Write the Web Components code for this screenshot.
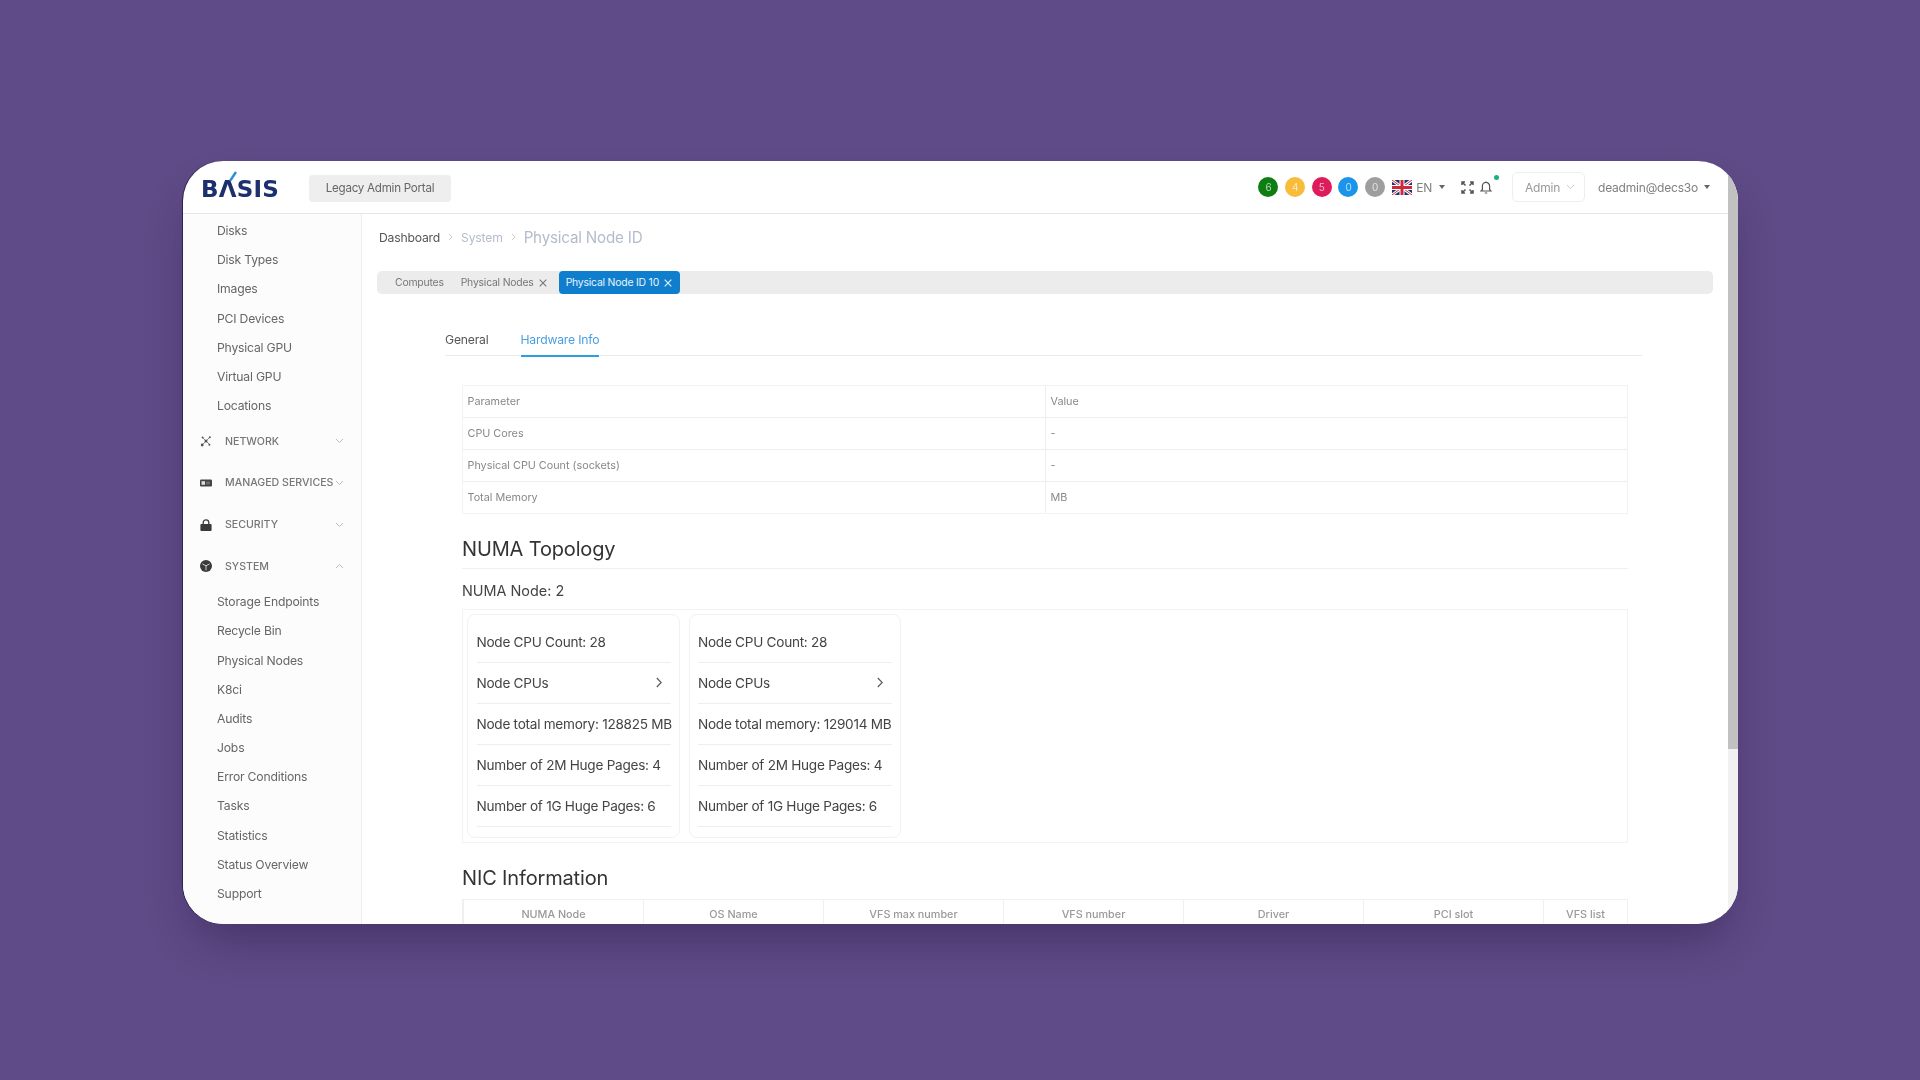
<!DOCTYPE html>
<html lang="en">
<head>
<meta charset="utf-8">
<title>Physical Node ID</title>
<style>
  html, body { margin: 0; height: 100%; }
  body {
    background: #5f4b87;
    font-family: Inter, "Liberation Sans", sans-serif;
    overflow: hidden;
  }
</style>
</head>
<body>
<basis-window>
  <basis-header slot="header"></basis-header>
  <basis-sidebar slot="sidebar">
    <side-item>Disks</side-item>
    <side-item>Disk Types</side-item>
    <side-item>Images</side-item>
    <side-item>PCI Devices</side-item>
    <side-item>Physical GPU</side-item>
    <side-item>Virtual GPU</side-item>
    <side-item>Locations</side-item>
    <side-group icon="network">NETWORK</side-group>
    <side-group icon="services">MANAGED SERVICES</side-group>
    <side-group icon="lock">SECURITY</side-group>
    <side-group icon="cube" open>SYSTEM</side-group>
    <side-item>Storage Endpoints</side-item>
    <side-item>Recycle Bin</side-item>
    <side-item>Physical Nodes</side-item>
    <side-item>K8ci</side-item>
    <side-item>Audits</side-item>
    <side-item>Jobs</side-item>
    <side-item>Error Conditions</side-item>
    <side-item>Tasks</side-item>
    <side-item>Statistics</side-item>
    <side-item>Status Overview</side-item>
    <side-item>Support</side-item>
  </basis-sidebar>
  <node-page slot="main"></node-page>
</basis-window>

<script>
const ICONS = {
  network: `<svg width="12" height="12" viewBox="0 0 12 12" fill="#555"><circle cx="2.600" cy="2.600" r="1"/><circle cx="9.800" cy="2.200" r="1"/><circle cx="2.200" cy="10" r="1.400"/><circle cx="9.400" cy="9.800" r="1"/><circle cx="6" cy="6" r="1.500"/><path d="M2.600 2.600l7 7M9.800 2.200L2.200 10" stroke="#555" stroke-width=".7"/></svg>`,
  services: `<svg width="12" height="12" viewBox="0 0 12 12"><rect x="0" y="2.600" width="12" height="6.800" rx="1.200" fill="#444"/><rect x="1.500" y="4.200" width="3.500" height="3.600" fill="#ddd"/><rect x="6.500" y="4.600" width="1" height="2.800" fill="#999"/><rect x="8.500" y="4.600" width="1" height="2.800" fill="#999"/></svg>`,
  lock: `<svg width="12" height="12" viewBox="0 0 12 12"><path d="M3.200 5.200V3.600a2.800 2.800 0 0 1 5.600 0v1.600" fill="none" stroke="#3a3a3a" stroke-width="1.300"/><rect x="0.400" y="5" width="11.200" height="7" rx="1" fill="#3a3a3a"/></svg>`,
  cube: `<svg width="12" height="12" viewBox="0 0 12 12"><circle cx="6" cy="6" r="6" fill="#3a3a3a"/><path d="M2.400 3.900L6 5.800l3.600-1.900M6 5.800v4.600" fill="none" stroke="#ddd" stroke-width=".9"/></svg>`,
};

const chevron = (color, up) => `<svg width="9" height="6" viewBox="0 0 9 6" fill="none" stroke="${color}" stroke-width="1"><path d="${up ? "M1 5l3.500-3.500L8 5" : "M1 1l3.500 3.500L8 1"}"/></svg>`;
const cross = (color) => `<svg width="8" height="8" viewBox="0 0 8 8" stroke="${color}" stroke-width="1.100"><path d="M.7.7l6.600 6.600M7.300.7L.7 7.300"/></svg>`;

class BasisWindow extends HTMLElement {
  constructor() {
    super();
    this.attachShadow({ mode: "open" });
    this.shadowRoot.innerHTML = `
    <style>
      :host {
        display: flex;
        width: 1555px;
        height: 763px;
        margin: 161px 0 0 183px;
        background: #fff;
        border-radius: 40px;
        overflow: hidden;
        box-shadow: -1px 0 0 #2b2450, 0 25px 45px -12px rgba(35, 20, 60, .45);
        filter: blur(.55px);
      }
      .app { flex: 1; min-width: 0; display: flex; flex-direction: column; }
      .body { flex: 1; min-height: 0; display: flex; }
      .scrollbar { width: 10px; background: #f1f1f1; }
      .thumb { height: 588px; background: #c1c1c1; }
    </style>
    <div class="app">
      <slot name="header"></slot>
      <div class="body">
        <slot name="sidebar"></slot>
        <slot name="main"></slot>
      </div>
    </div>
    <div class="scrollbar"><div class="thumb"></div></div>`;
  }
}

class StatusDot extends HTMLElement {
  constructor() {
    super();
    this.attachShadow({ mode: "open" });
    this.shadowRoot.innerHTML = `
    <style>
      :host {
        display: flex;
        width: 20px;
        height: 20px;
        border-radius: 50%;
        align-items: center;
        justify-content: center;
        font-size: 10px;
        color: #ffffffb0;
        background: var(--dot);
      }
    </style>
    <slot></slot>`;
  }
}

class BasisHeader extends HTMLElement {
  constructor() {
    super();
    this.attachShadow({ mode: "open" });
    this.shadowRoot.innerHTML = `
    <style>
      :host {
        display: flex;
        align-items: center;
        height: 52px;
        flex: none;
        border-bottom: 1px solid #e6e6e6;
        font-size: 12px;
        letter-spacing: -.2px;
        color: #808080;
      }
      .logo {
        position: relative;
        margin: 3px 0 0 18px;
        width: 108px;
        flex: none;
        font: bold 23px/28px "DejaVu Sans", sans-serif;
        color: #1c2f6e;
        letter-spacing: .2px;
      }
      .logo svg { position: absolute; left: 26px; top: -4px; }
      .legacy {
        width: 142px;
        height: 27px;
        margin-top: 2px;
        display: flex;
        align-items: center;
        justify-content: center;
        background: #eee;
        border-radius: 4px;
        color: #666;
        font-size: 11.600px;
        letter-spacing: -.25px;
      }
      .tools { margin-left: auto; display: flex; align-items: center; }
      .dots { display: flex; gap: 6.700px; margin-right: 7px; }
      .lang { display: flex; align-items: center; gap: 4px; }
      .caret { width: 0; height: 0; border: 3.500px solid transparent; border-top: 4px solid #666; border-bottom: 0; }
      .full { margin: 0 0 0 16px; display: flex; }
      .bell { margin-left: 6px; position: relative; display: flex; }
      .bell i {
        position: absolute;
        width: 5px;
        height: 5px;
        border-radius: 50%;
        background: #1fae80;
        left: 14px;
        top: -6px;
      }
      .role {
        height: 28px;
        margin-left: 20px;
        border: 1px solid #eee;
        border-radius: 5px;
        display: flex;
        align-items: center;
        justify-content: space-between;
        padding: 0 9px 0 12px;
        width: 50px;
        color: #999;
      }
      .user { margin: 0 18px 0 13px; display: flex; align-items: center; gap: 6px; }
    </style>
    <div class="logo">BΛSIS<svg width="12" height="10" viewBox="0 0 12 10"><path d="M3 10L9 1" stroke="#2a8fd8" stroke-width="2.400"/></svg></div>
    <div class="legacy">Legacy Admin Portal</div>
    <div class="tools">
      <div class="dots">
        <status-dot style="--dot:#0e7d12">6</status-dot>
        <status-dot style="--dot:#f8bc3b">4</status-dot>
        <status-dot style="--dot:#df1c5b">5</status-dot>
        <status-dot style="--dot:#1a95ea">0</status-dot>
        <status-dot style="--dot:#9e9e9e">0</status-dot>
      </div>
      <div class="lang">
        <svg width="20" height="15" viewBox="0 0 60 45"><rect width="60" height="45" fill="#2b2f6b"/><path d="M0 0l60 45M60 0L0 45" stroke="#fff" stroke-width="9"/><path d="M0 0l60 45M60 0L0 45" stroke="#cc2a3c" stroke-width="3"/><path d="M30 0v45M0 22.500h60" stroke="#fff" stroke-width="15"/><path d="M30 0v45M0 22.500h60" stroke="#cc2a3c" stroke-width="9"/></svg>
        <span>EN</span><span class="caret" style="margin-left:3px"></span>
      </div>
      <div class="full"><svg width="13" height="13" viewBox="0 0 13 13" fill="none" stroke="#555" stroke-width="1.500"><path d="M1 4V1h3M1 1l3.500 3.500M12 4V1H9M12 1L8.500 4.500M1 9v3h3M1 12l3.500-3.500M12 9v3H9M12 12L8.500 8.500"/></svg></div>
      <div class="bell"><svg width="12" height="13" viewBox="0 0 12 13" fill="none" stroke="#555" stroke-width="1.200"><path d="M1 10h10L9.600 8.500V5a3.600 3.600 0 0 0-7.200 0v3.500zM4.800 12h2.400M6 1V.4"/></svg><i></i></div>
      <div class="role"><span>Admin</span>${chevron("#ccc")}</div>
      <div class="user"><span>deadmin@decs3o</span><span class="caret"></span></div>
    </div>`;
  }
}

class BasisSidebar extends HTMLElement {
  constructor() {
    super();
    this.attachShadow({ mode: "open" });
    this.shadowRoot.innerHTML = `
    <style>
      :host {
        display: block;
        flex: none;
        width: 178px;
        padding-top: 2px;
        background: #fcfcfc;
        border-right: 1px solid #eee;
        overflow: hidden;
      }
    </style>
    <slot></slot>`;
  }
}

class SideItem extends HTMLElement {
  constructor() {
    super();
    this.attachShadow({ mode: "open" });
    this.shadowRoot.innerHTML = `
    <style>
      :host {
        display: flex;
        align-items: center;
        height: 29.200px;
        padding-left: 34px;
        font-size: 12.200px;
        letter-spacing: -.2px;
        color: #666;
      }
    </style>
    <slot></slot>`;
  }
}

class SideGroup extends HTMLElement {
  connectedCallback() {
    const icon = ICONS[this.getAttribute("icon")];
    const open = this.hasAttribute("open");
    this.attachShadow({ mode: "open" });
    this.shadowRoot.innerHTML = `
    <style>
      :host {
        display: flex;
        align-items: center;
        height: 41.700px;
        padding-left: 17px;
        font-size: 10.600px;
        font-weight: 500;
        color: #777;
      }
      .icon { display: flex; width: 12px; margin-right: 13px; }
      .label { white-space: nowrap; width: 110px; }
      .chev { display: flex; }
    </style>
    <span class="icon">${icon}</span>
    <span class="label"><slot></slot></span>
    <span class="chev">${chevron("#bbb", open)}</span>`;
  }
}

class CrumbBar extends HTMLElement {
  constructor() {
    super();
    this.attachShadow({ mode: "open" });
    this.shadowRoot.innerHTML = `
    <style>
      :host {
        display: flex;
        align-items: center;
        height: 24px;
        margin: 11px 0 0 17px;
        font-size: 12.200px;
        letter-spacing: -.2px;
        color: #555;
      }
      .sep { margin: 0 8px; display: flex; }
      .mid { color: #b4bccb; }
      .cur { color: #b4bccb; font-size: 15.200px; }
    </style>
    <span>Dashboard</span>
    <span class="sep"><svg width="5" height="8" viewBox="0 0 5 8" fill="none" stroke="#ccc"><path d="M1 1l3 3-3 3"/></svg></span>
    <span class="mid">System</span>
    <span class="sep"><svg width="5" height="8" viewBox="0 0 5 8" fill="none" stroke="#ccc"><path d="M1 1l3 3-3 3"/></svg></span>
    <span class="cur">Physical Node ID</span>`;
  }
}

class TabChip extends HTMLElement {
  connectedCallback() {
    const active = this.hasAttribute("active");
    const close = this.hasAttribute("close");
    this.attachShadow({ mode: "open" });
    this.shadowRoot.innerHTML = `
    <style>
      :host {
        display: flex;
        align-items: center;
        gap: 5px;
        height: 23px;
        font-size: 10.400px;
        letter-spacing: -.2px;
        white-space: nowrap;
        color: ${active ? "#e8f4fd" : "#777"};
        background: ${active ? "#0f7ecd" : "transparent"};
        border-radius: ${active ? "4px" : "0"};
        padding: 0 ${active ? "8px 0 7px" : "0"};
      }
      span { display: flex; }
    </style>
    <slot></slot>
    ${close ? `<span>${cross(active ? "#e8f4fd" : "#777")}</span>` : ""}`;
  }
}

class TabStrip extends HTMLElement {
  constructor() {
    super();
    this.attachShadow({ mode: "open" });
    this.shadowRoot.innerHTML = `
    <style>
      :host {
        display: flex;
        align-items: center;
        height: 23px;
        margin: 22px 15px 0 15px;
        padding-left: 18px;
        background: #ececec;
        border-radius: 5px;
      }
      ::slotted(:nth-child(1)) { margin-right: 17px; }
      ::slotted(:nth-child(2)) { margin-right: 12px; }
    </style>
    <slot></slot>`;
  }
}

class DetailTabs extends HTMLElement {
  constructor() {
    super();
    this.attachShadow({ mode: "open" });
    this.shadowRoot.innerHTML = `
    <style>
      :host {
        display: flex;
        height: 31px;
        margin-top: 30px;
        gap: 32px;
        border-bottom: 1.500px solid #e8ecef;
        font-size: 12.200px;
        letter-spacing: -.2px;
        color: #555;
      }
      .on { color: #4a9fe0; position: relative; }
      .on::after {
        content: "";
        position: absolute;
        left: 0;
        right: 0;
        bottom: -1.500px;
        height: 2px;
        background: #2f9ee0;
      }
      span { height: 31px; line-height: 31px; }
    </style>
    <span>General</span>
    <span class="on">Hardware Info</span>`;
  }
}

class ParamTable extends HTMLElement {
  constructor() {
    super();
    this.attachShadow({ mode: "open" });
    const rows = [["Parameter", "Value"], ["CPU Cores", "-"], ["Physical CPU Count (sockets)", "-"], ["Total Memory", "MB"]];
    this.shadowRoot.innerHTML = `
    <style>
      :host {
        display: block;
        margin: 29px 14px 0 17px;
        border: 1px solid #f3f3f3;
        border-bottom: 0;
        font-size: 10.800px;
        color: #888;
      }
      .row {
        display: grid;
        grid-template-columns: 582px 1fr;
        height: 31px;
        border-bottom: 1.500px solid #eee;
        align-items: stretch;
      }
      .row:last-child { border-bottom-color: #f3f3f3; }
      .row span { display: flex; align-items: center; padding-left: 4.500px; }
      .row span + span { border-left: 1px solid #eee; }
    </style>
    ${rows.map(([a, b]) => `<div class="row"><span>${a}</span><span>${b}</span></div>`).join("")}`;
  }
}

class SectionTitle extends HTMLElement {
  constructor() {
    super();
    this.attachShadow({ mode: "open" });
    this.shadowRoot.innerHTML = `
    <style>
      :host { display: block; color: #333; font-size: 20px; letter-spacing: -.15px; line-height: 30px; }
    </style>
    <slot></slot>`;
  }
}

class NumaRow extends HTMLElement {
  connectedCallback() {
    const arrow = this.hasAttribute("arrow");
    this.attachShadow({ mode: "open" });
    this.shadowRoot.innerHTML = `
    <style>
      :host {
        display: flex;
        align-items: center;
        justify-content: space-between;
        height: 41.200px;
        box-sizing: border-box;
        border-bottom: 1px solid #eee;
        white-space: nowrap;
        font-size: 13.600px;
        color: #444;
        padding-right: 6px;
        letter-spacing: -.27px;
      }
      svg { margin-right: 3px; }
    </style>
    <slot></slot>
    ${arrow ? `<svg width="6" height="11" viewBox="0 0 6 11" fill="none" stroke="#555" stroke-width="1.100"><path d="M.8 1l4.400 4.500L.8 10"/></svg>` : ""}`;
  }
}

class NumaCard extends HTMLElement {
  constructor() {
    super();
    this.attachShadow({ mode: "open" });
    this.shadowRoot.innerHTML = `
    <style>
      :host {
        display: block;
        box-sizing: border-box;
        width: 212.500px;
        height: 224px;
        padding: 7px 8px 0 8.500px;
        border: 1px solid #f2f2f2;
        border-radius: 8px;
      }
    </style>
    <slot></slot>`;
  }
}

class NicTable extends HTMLElement {
  constructor() {
    super();
    this.attachShadow({ mode: "open" });
    const cols = ["NUMA Node", "OS Name", "VFS max number", "VFS number", "Driver", "PCI slot", "VFS list"];
    this.shadowRoot.innerHTML = `
    <style>
      :host {
        display: grid;
        grid-template-columns: repeat(6, 180px) 1fr;
        height: 36px;
        margin: 6px 14px 0 17px;
        border: 1px solid #f0f0f0;
        font-size: 10.800px;
        font-weight: 500;
        color: #999;
      }
      span { padding-top: 8px; line-height: 14px; text-align: center; border-left: 1px solid #f0f0f0; }
      span:first-child { border-left: 0; }
    </style>
    ${cols.map((c) => `<span>${c}</span>`).join("")}`;
  }
}

class NodePage extends HTMLElement {
  constructor() {
    super();
    this.attachShadow({ mode: "open" });
    const card = (mem) => `
      <numa-card>
        <numa-row>Node CPU Count: 28</numa-row>
        <numa-row arrow>Node CPUs</numa-row>
        <numa-row>Node total memory: ${mem} MB</numa-row>
        <numa-row>Number of 2M Huge Pages: 4</numa-row>
        <numa-row>Number of 1G Huge Pages: 6</numa-row>
      </numa-card>`;
    this.shadowRoot.innerHTML = `
    <style>
      :host { display: block; flex: 1; min-width: 0; overflow: hidden; }
      .detail { margin: 0 86px 0 83px; }
      .heading { margin: 20px 14px 0 17px; padding-bottom: 4px; border-bottom: 1px solid #f0f0f0; }
      .node {
        margin: 12px 0 0 17px;
        font-size: 14.400px;
        line-height: 20px;
        color: #444;
      }
      .cards {
        display: flex;
        gap: 9px;
        height: 234px;
        box-sizing: border-box;
        margin: 7.500px 14px 0 17px;
        padding: 4px;
        border: 1px solid #f3f3f3;
      }
      .nic { margin: 20px 0 0 17px; }
    </style>
    <crumb-bar></crumb-bar>
    <tab-strip>
      <tab-chip>Computes</tab-chip>
      <tab-chip close>Physical Nodes</tab-chip>
      <tab-chip active close>Physical Node ID 10</tab-chip>
    </tab-strip>
    <div class="detail">
      <detail-tabs></detail-tabs>
      <param-table></param-table>
      <div class="heading"><section-title>NUMA Topology</section-title></div>
      <div class="node">NUMA Node: 2</div>
      <div class="cards">${card("128825")}${card("129014")}</div>
      <div class="nic"><section-title>NIC Information</section-title></div>
      <nic-table></nic-table>
    </div>`;
  }
}

customElements.define("basis-window", BasisWindow);
customElements.define("status-dot", StatusDot);
customElements.define("basis-header", BasisHeader);
customElements.define("basis-sidebar", BasisSidebar);
customElements.define("side-item", SideItem);
customElements.define("side-group", SideGroup);
customElements.define("crumb-bar", CrumbBar);
customElements.define("tab-chip", TabChip);
customElements.define("tab-strip", TabStrip);
customElements.define("detail-tabs", DetailTabs);
customElements.define("param-table", ParamTable);
customElements.define("section-title", SectionTitle);
customElements.define("numa-row", NumaRow);
customElements.define("numa-card", NumaCard);
customElements.define("nic-table", NicTable);
customElements.define("node-page", NodePage);
</script>
</body>
</html>
